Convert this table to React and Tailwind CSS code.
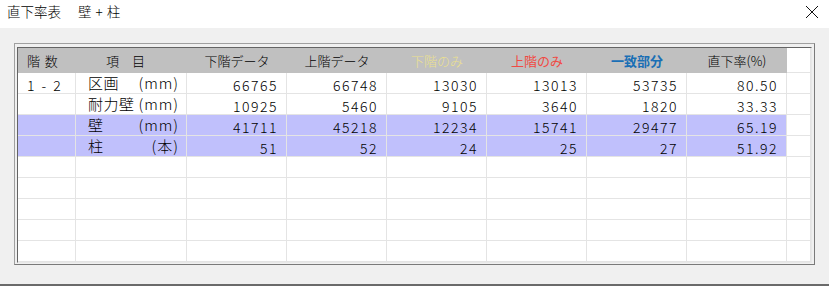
import React from 'react';

// 直下率表（壁 + 柱）ダイアログ
const COLS = [
  { label: '下階データ', cls: 'text-black' },
  { label: '上階データ', cls: 'text-black' },
  { label: '下階のみ', cls: 'text-[#ece08e]' },
  { label: '上階のみ', cls: 'text-[#f04a44] font-normal' },
  { label: '一致部分', cls: 'text-[#1a6fb5] font-bold' },
  { label: '直下率(%)', cls: 'text-black' },
];

const ROWS = [
  { floor: '1 - 2', name: '区画', unit: '(mm)', values: ['66765', '66748', '13030', '13013', '53735', '80.50'], hl: false },
  { floor: '', name: '耐力壁', unit: '(mm)', values: ['10925', '5460', '9105', '3640', '1820', '33.33'], hl: false },
  { floor: '', name: '壁', unit: '(mm)', values: ['41711', '45218', '12234', '15741', '29477', '65.19'], hl: true },
  { floor: '', name: '柱', unit: '(本)', values: ['51', '52', '24', '25', '27', '51.92'], hl: true },
];

const EMPTY_ROWS = 5;

const cell = 'h-[21px] border-r border-b border-[#e4e4e4]';

function DataRow({ row }) {
  const bg = row.hl ? 'bg-[#c0c0fc]' : 'bg-white';
  return (
    <>
      <div className={`${cell} ${bg} pl-[9px] pt-[2px] text-[14px] tracking-[2px]`}>{row.floor}</div>
      <div className={`${cell} ${bg} pl-[12px] pr-[7px] flex justify-between items-center text-[15px]`}>
        <span className="tracking-[0.5px]">{row.name}</span>
        <span className="tracking-[1px]">{row.unit}</span>
      </div>
      {row.values.map((v, i) => (
        <div key={i} className={`${cell} ${bg} pr-[8px] pt-[2px] text-right text-[14px] tracking-[1.5px]`}>
          {v}
        </div>
      ))}
      <div className={`${cell} bg-white`} />
    </>
  );
}

function EmptyRow() {
  return (
    <>
      {Array.from({ length: 9 }).map((_, i) => (
        <div key={i} className={`${cell} bg-white`} />
      ))}
    </>
  );
}

export default function App() {
  return (
    <div
      className="w-[829px] h-[286px] bg-[#f0f0f0] flex flex-col text-black font-light"
      style={{ fontFamily: '"Noto Sans CJK JP", "Noto Sans", sans-serif' }}
    >
      {/* タイトルバー */}
      <div className="h-[28px] bg-white flex items-center justify-between pl-[7px] pr-[10px] shrink-0">
        <span className="text-[13.5px] leading-none pb-[4px] flex items-center">
          <span>直下率表</span>
          <span className="ml-[17px]">壁</span>
          <span className="mx-[4px]">+</span>
          <span>柱</span>
        </span>
        <svg width="14" height="14" viewBox="0 0 14 14" className="mb-[4px]">
          <path d="M1 1 L13 13 M13 1 L1 13" stroke="#111" strokeWidth="1" fill="none" />
        </svg>
      </div>

      <div className="flex-1 pt-[15px] pl-[14px]">
        {/* 枠 */}
        <div className="w-[801px] h-[222px] border border-[#a0a0a0] border-r-[#7a7a7a] border-b-[#7a7a7a] pt-[3px] pl-[2px]">
          <div className="w-[795px] h-[216px] border border-l-[#646464] border-t-[#646464] border-r-[#e8e8e8] border-b-[#e8e8e8] bg-white overflow-hidden">
            <div className="grid grid-cols-[58px_111px_repeat(6,100px)_24px]">
              {/* ヘッダー */}
              <div className="h-[25px] bg-[#c0c0c0] pl-[9px] flex items-center text-[13px] tracking-[1px]">
                階 数
              </div>
              <div className="h-[25px] bg-[#c0c0c0] pl-[30px] flex items-center text-[13px]">項　目</div>
              {COLS.map((c) => (
                <div
                  key={c.label}
                  className={`h-[25px] bg-[#c0c0c0] flex items-center justify-center text-[13px] ${c.cls}`}
                >
                  {c.label}
                </div>
              ))}
              <div className="h-[25px] bg-white border-r border-b border-[#e4e4e4]" />

              {ROWS.map((r, i) => (
                <DataRow key={i} row={r} />
              ))}
              {Array.from({ length: EMPTY_ROWS }).map((_, i) => (
                <EmptyRow key={i} />
              ))}
            </div>
          </div>
        </div>
      </div>

      <div className="h-[2px] bg-[#6a6a6a] shrink-0" />
    </div>
  );
}
